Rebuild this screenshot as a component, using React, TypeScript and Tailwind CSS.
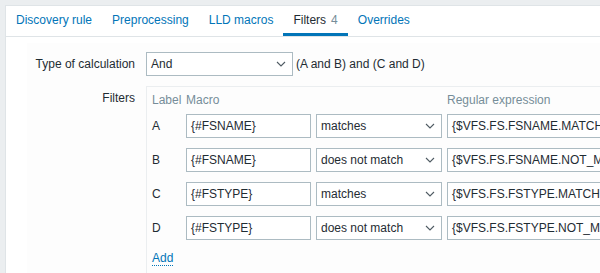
const tabs = [
  { label: "Discovery rule" },
  { label: "Preprocessing" },
  { label: "LLD macros" },
  { label: "Filters", count: 4, active: true },
  { label: "Overrides" },
];

const filters = [
  { label: "A", macro: "{#FSNAME}", op: "matches", value: "{$VFS.FS.FSNAME.MATCHES}" },
  { label: "B", macro: "{#FSNAME}", op: "does not match", value: "{$VFS.FS.FSNAME.NOT_MATCHES}" },
  { label: "C", macro: "{#FSTYPE}", op: "matches", value: "{$VFS.FS.FSTYPE.MATCHES}" },
  { label: "D", macro: "{#FSTYPE}", op: "does not match", value: "{$VFS.FS.FSTYPE.NOT_MATCHES}" },
];

function Chevron() {
  return (
    <svg width="10" height="6" viewBox="0 0 10 6" className="shrink-0">
      <path d="M1 1l4 4 4-4" fill="none" stroke="#4f5b63" strokeWidth="1.1" />
    </svg>
  );
}

function Select({ value, width }: { value: string; width: string }) {
  return (
    <div
      className={`${width} flex h-[24px] shrink-0 items-center justify-between border border-[#acbbc2] bg-white pl-[4px] pr-[6px]`}
    >
      <span>{value}</span>
      <Chevron />
    </div>
  );
}

function Input({ value, width }: { value: string; width: string }) {
  return (
    <div
      className={`${width} flex h-[24px] shrink-0 items-center overflow-hidden whitespace-nowrap border border-[#acbbc2] bg-white pl-[4px]`}
    >
      {value}
    </div>
  );
}

export default function App() {
  return (
    <div className="h-[273px] w-[600px] overflow-hidden bg-[#ebeef0] pl-[5px] pt-[5px] font-['Liberation_Sans',Arial,sans-serif] text-[12px] text-[#1f2c33]">
      <div className="h-[300px] w-[700px] border border-[#dfe4e7] bg-white">
        <div className="flex border-b border-[#dfe4e7]">
          {tabs.map((t) => (
            <div
              key={t.label}
              className={[
                "flex h-[30px] items-center border-b-[3px] px-[10px] pt-[1px]",
                t.active ? "border-[#0275b8] text-[#1f2c33]" : "border-transparent text-[#0275b8]",
              ].join(" ")}
            >
              {t.label}
              {t.count && <span className="ml-[5px] text-[#768d99]">{t.count}</span>}
            </div>
          ))}
        </div>

        <div className="ml-[21px] mt-[6px] bg-[#fdfdfd] pt-[9px]">
          <div className="flex items-center">
            <div className="w-[108px] text-right">Type of calculation</div>
            <div className="ml-[11px] flex items-center">
              <Select value="And" width="w-[147px]" />
              <span className="ml-[3px]">(A and B) and (C and D)</span>
            </div>
          </div>

          <div className="mt-[10px] flex">
            <div className="w-[108px] pt-[5px] text-right leading-[14px]">Filters</div>
            <div className="ml-[11px] flex-1 border-l border-t border-[#ebeef0] pl-[5px] pt-[4px]">
              <div className="flex h-[18px] items-center text-[#768d99]">
                <div className="w-[34px]">Label</div>
                <div className="w-[130px]">Macro</div>
                <div className="w-[131px]"></div>
                <div>Regular expression</div>
              </div>
              <div className="mt-[5px] flex flex-col gap-[10px]">
                {filters.map((f) => (
                  <div key={f.label} className="flex items-center">
                    <div className="w-[34px]">{f.label}</div>
                    <Input value={f.macro} width="w-[125px]" />
                    <div className="ml-[5px]">
                      <Select value={f.op} width="w-[126px]" />
                    </div>
                    <div className="ml-[5px]">
                      <Input value={f.value} width="w-[220px]" />
                    </div>
                  </div>
                ))}
              </div>
              <div className="mt-[9px] pb-[10px]">
                <span className="border-b border-dotted border-[#0275b8] text-[#0275b8]">Add</span>
              </div>
            </div>
          </div>
        </div>
      </div>
    </div>
  );
}
